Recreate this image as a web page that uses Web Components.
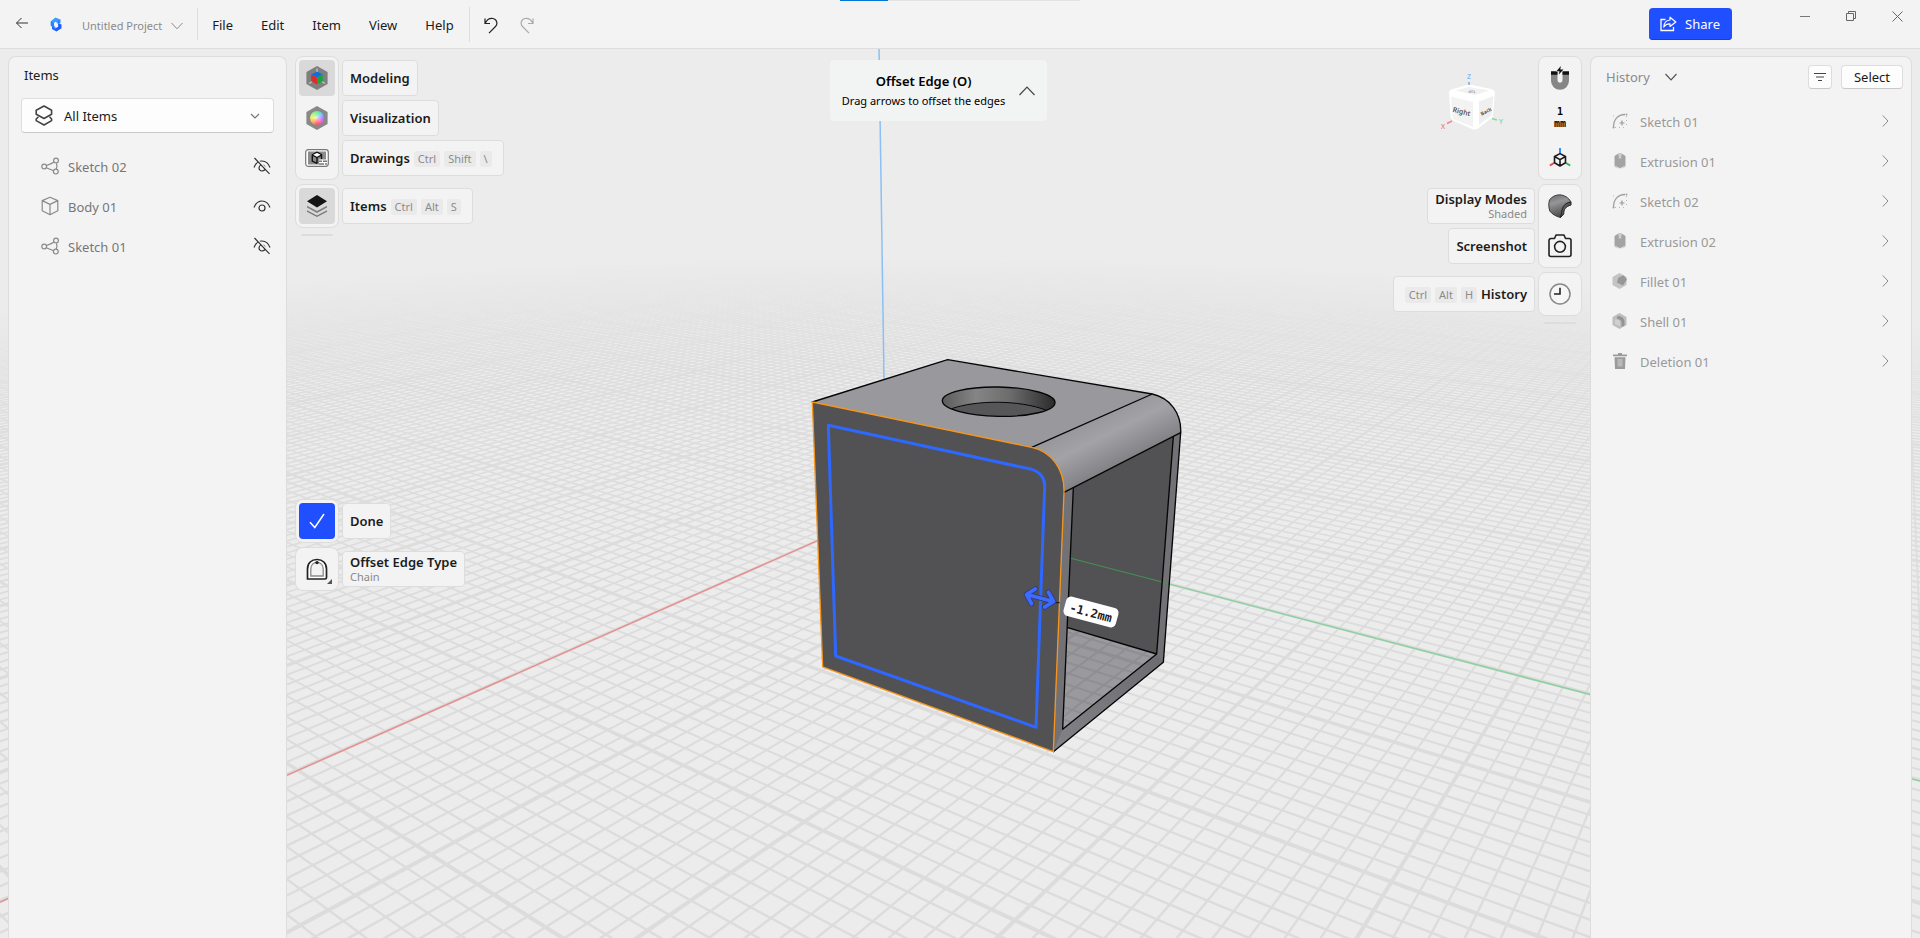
<!DOCTYPE html>
<html lang="en">
<head>
<meta charset="utf-8">
<title>Untitled Project</title>
<style>
  html, body {
    height: 100%;
    margin: 0;
  }

  body {
    font: 13px/18px "Noto Sans", "Open Sans", sans-serif;
    color: #1b1b1b;
    background: #ececec;
    overflow: hidden;
    --surface: #f3f3f3;
    --edge: #dddddd;
    --accent: #1f4fff;
    --muted: #8a8a8a;
  }
</style>
</head>
<body>

<modeler-app></modeler-app>

<script>

/**
 * Icon markup by name: [width, height, svg content]
 */
const ICONS = {
  back: [14, 12, '<path d="M13 6H1.500M6.500 1 1.500 6l5 5" stroke="#333" fill="none"/>'],
  logo: [12, 15, '<path d="M.800 4.200 5.500.400 10.300 2.400V6.200L8 7 5.800 4.800 3.800 6V8.500L6 10.800 4.500 11.200.800 8.800Z" fill="#3b9cff"/><path d="M.800 4.200V8.800L4.500 11.200 3.800 6Z" fill="#2a80ff"/><path d="M8 6.200 11.500 7.500V11.200L6.500 14.600 2 12V9.500L5 11.500 8.200 9.800Z" fill="#1f5dff"/><path d="M8 3.500 10.300 2.400V6.200L8 6.200Z" fill="#2f86ff"/>'],
  down: [14, 8, '<path d="M1.500 1 7 6.800 12.500 1" stroke="#8a8a8a" fill="none"/>'],
  downDark: [14, 8, '<path d="M1.500 1 7 6.800 12.500 1" stroke="#555" stroke-width="1.200" fill="none"/>'],
  downSmall: [10, 6, '<path d="M1 1 5 5 9 1" stroke="#777" stroke-width="1.200" fill="none"/>'],
  up: [16, 10, '<path d="M.500 9 8 1.200 15.500 9" stroke="#444" stroke-width="1.200" fill="none"/>'],
  undo: [14, 17, '<path d="M1 1.500V6.500H6M1.200 6.200C3 2.500 6 1 9 1.500c4 .700 5 5.500 2.500 8L5 16.200" stroke="#222" stroke-width="1.200" fill="none"/>'],
  redo: [14, 17, '<path d="M13 1.500V6.500H8M12.800 6.200C11 2.500 8 1 5 1.500 1 2.200 0 7 2.500 9.500L9 16.200" stroke="#aaa" stroke-width="1.200" fill="none"/>'],
  share: [17, 16, '<path d="M5.500 3.500H1v11h12.500V11" stroke="#fff" stroke-width="1.300" fill="none"/><path d="M10 1.200 15.800 6 10 10.500V7.800C7 7.600 5.200 8.600 3.800 11 4 7.200 6.300 4.300 10 4Z" stroke="#fff" stroke-width="1.200" stroke-linejoin="round" fill="none"/>'],
  minimize: [10, 10, '<path d="M0 5.500H10" stroke="#777"/>'],
  restore: [10, 10, '<path d="M.500 2.500h7v7h-7ZM2.500 2.500v-2h7v7h-2" stroke="#666" fill="none"/>'],
  close: [11, 11, '<path d="M.500.500l10 10M10.500.500l-10 10" stroke="#666" fill="none"/>'],
  allItems: [18, 21, '<g stroke="#444" stroke-width="1.600" stroke-linejoin="round" stroke-linecap="round" fill="none"><path d="M9 1 16.600 5.200V9.200L9 13.500 1.200 9.200V5.200Z"/><path d="M3 12.200 1.200 14V15.600L9 20l7.600-4.400V14L15 12.200"/></g>'],
  sketch: [19, 18, '<g stroke="#8a8a8a" stroke-width="1.200" fill="none"><circle cx="3.200" cy="9.500" r="2.400"/><circle cx="15" cy="3.600" r="2.400"/><circle cx="14.800" cy="14.600" r="2.400"/><path d="M5.400 8.500C8.500 7.600 11 6.500 13 5M5.300 10.700l7.200 3M15.500 6.200c.700 2 .600 4-.2 6"/></g>'],
  body: [18, 20, '<path d="M9 1.200 16.800 4.600V14.800L9 18.800 1.200 14.800V4.600ZM1.200 4.600 9 8.400l7.800-3.800M9 8.400V18.800" stroke="#8a8a8a" stroke-width="1.200" stroke-linejoin="round" fill="none"/>'],
  eye: [18, 14, '<path d="M1 8.500C2.500 4.500 5.500 2 9 2s6.500 2.500 8 6.500" stroke="#333" stroke-width="1.200" fill="none"/><circle cx="9" cy="9" r="3" stroke="#333" stroke-width="1.200" fill="none"/>'],
  eyeOff: [18, 18, '<path d="M1 10.500C2.500 6.500 5.500 4 9 4s6.500 2.500 8 6.500" stroke="#333" stroke-width="1.200" fill="none"/><circle cx="9" cy="11" r="3" stroke="#333" stroke-width="1.200" fill="none"/><path d="M2 .500 17 16.300" stroke="#f3f3f3" stroke-width="2"/><path d="M1.500 1 16.500 16.800" stroke="#333" stroke-width="1.200"/>'],
  modeling: [22, 24, '<path d="M11 0 21.600 6V18L11 24 .400 18V6Z" fill="#7f7f7f"/><path d="M11 2.500v4M3 17.500l4-2.500M19 17.500 15 15" stroke="#c4c4c4" stroke-width="1.400"/><path d="M11 5.500 16.800 8.500 11 11.600 5.200 8.500Z" fill="#0f6fe0"/><path d="M5.200 8.500 11 11.600V18.500L5.200 15.300Z" fill="#e02b2b"/><path d="M16.800 8.500 11 11.600V18.500l5.800-3.200Z" fill="#18a53c"/>'],
  visualization: [22, 24, '<path d="M11 0 21.600 6V18L11 24 .400 18V6Z" fill="#888"/><foreignObject x="4" y="5" width="14" height="14"><div class="wheel"></div></foreignObject>'],
  drawings: [24, 18, '<rect x=".700" y=".700" width="22.600" height="16.600" rx="2.500" fill="#fff" stroke="#777" stroke-width="1.200"/><path d="M3 2.500H21V10.500H14V15.500H3Z" fill="#8c8c8c"/><path d="M14 12.200h3M18 12.200h4M14 15h5M20 15h2" stroke="#777" stroke-width="1.600"/><path d="M12 3.200 16.500 5.600V10M12 14.500 7.300 12V5.800L12 3.200M7.300 5.800 12 8.400 16.500 5.800M12 8.400v6" stroke="#111" stroke-width="1.400" fill="none"/><path d="M12 3.900 15.600 5.800 12 7.700 8.200 5.800Z" fill="#fff"/>'],
  layers: [20, 22, '<path d="M0 15.200 10 20.500 20 15.200V16.800L10 22 0 16.800Z" fill="#777"/><path d="M0 10.700 10 16 20 10.700V12.600L10 18 0 12.600Z" fill="#808080"/><path d="M10 0 20 6.200 10 12.400 0 6.200Z" fill="#151515"/>'],
  magnet: [18, 24, '<path d="M0 6h6.500v8.200a2.500 2.500 0 0 0 5 0V6H18v8.800a9 9 0 0 1-18 0Z" fill="#868686"/><path d="M0 5.200h6.500v3.600H0ZM11.500 5.200H18v3.600h-6.500Z" fill="#111"/><path d="M9.800 0 5.500 5.200h3L7.800 8.500 12.500 3.500H9.300Z" fill="#111" stroke="#f3f3f3" stroke-width=".800" paint-order="stroke"/>'],
  axes: [22, 20, '<path d="M11 0V6" stroke="#3391ff" stroke-width="2"/><path d="M.800 17.500 5 15" stroke="#f04438" stroke-width="2"/><path d="M21.200 17.500 17 15" stroke="#23b455" stroke-width="2"/><path d="M11 5.600 16.500 8.500V14.800L11 18 5.500 14.800V8.500ZM5.500 8.500 11 11.600 16.500 8.500M11 11.600V18" stroke="#1b1b1b" stroke-width="1.600" stroke-linejoin="round" fill="none"/>'],
  shaded: [24, 24, '<defs><linearGradient id="s" x1="0" y1="0" x2=".300" y2="1"><stop offset="0" stop-color="#6b6b6d"/><stop offset=".400" stop-color="#969698"/><stop offset="1" stop-color="#4d4d4f"/></linearGradient></defs><path d="M1.500 6C3.500 3 7 1 11.500.800 16.500 1.200 20.500 3.500 23 8c-4.500 1-7.500 4-8 8.500L12.500 23.500C8 22.500 4 20 1.800 17 .500 13 .500 9 1.500 6Z" fill="url(#s)" stroke="#3a3a3a"/><path d="M23 8c-6 1-9 4.500-9.200 10l-1.300 5.500 3.300-3.500c-.300-4.500 2-7.500 7.200-9Z" fill="#58585a" stroke="#222"/>'],
  camera: [24, 24, '<path d="M3 4.500H6.500L8 1H16l1.500 3.500H21a2 2 0 0 1 2 2V20.500a2 2 0 0 1-2 2H3a2 2 0 0 1-2-2V6.500a2 2 0 0 1 2-2Z" stroke="#222" stroke-width="1.600" stroke-linejoin="round" fill="none"/><circle cx="12" cy="12.800" r="5.400" stroke="#222" stroke-width="1.600" fill="none"/>'],
  clock: [22, 22, '<circle cx="11" cy="11" r="10" stroke="#888" stroke-width="1.500" fill="#f6f6f6"/><path d="M11 4.800V11H5" stroke="#222" stroke-width="1.600" fill="none"/>'],
  check: [18, 18, '<path d="M2 10.200 6.800 15.500 16 2" stroke="#fff" stroke-width="1.500" fill="none"/>'],
  chain: [22, 22, '<path d="M1.500 21V11C1.500 5 5.500 1.500 11 1.500S20.500 5 20.500 11V19.500a1.500 1.500 0 0 1-1.500 1.500Z" stroke="#222" stroke-width="1.700" fill="#fff"/><path d="M4.800 18V11C4.800 7 7.500 4.500 11 4.500s6.200 2.500 6.200 6.500v7Z" stroke="#8a8a8a" stroke-width="1.300" fill="#f3f3f3"/><circle cx="11" cy="4.600" r="1.700" fill="#222"/>'],
  filter: [12, 10, '<path d="M0 1.500H12M2 5H10M4 8.500H8" stroke="#444" stroke-width="1.200"/>'],
  next: [7, 12, '<path d="M.800.500 6 6 .800 11.500" stroke="#8a8a8a" fill="none"/>'],
  hSketch: [16, 16, '<path d="M1.500 14C1.500 7 5.500 1.500 13 1.500" stroke="#a0a0a0" stroke-width="1.300" fill="none"/><path d="M10 7.500v5M7.500 10h5" stroke="#999" stroke-width="1.200"/><path d="M3 14.500H15M14.500 3V13M1 3h3" stroke="#b8b8b8" stroke-dasharray="1 3"/><circle cx="14.500" cy="1.500" r="1" fill="#a0a0a0"/><circle cx="1.500" cy="14.500" r="1" fill="#a0a0a0"/>'],
  hExtrusion: [12, 16, '<path d="M.500 12.500 6 16l5.500-3.500V14L6 16 .500 14Z" fill="#ccc"/><path d="M3.500 1 6 0 8.500 1 11.500 3V12.500L6 15.300.500 12.500V3Z" fill="#a3a3a3"/><path d="M6 0 8.500 2H7.300V5.500H4.700V2H3.500Z" fill="#cfcfcf"/>'],
  hFillet: [16, 16, '<path d="M7.500 0 14.500 4V12L7.500 16 .500 12V4Z" fill="#c4c4c4"/><path d="M6.500 4.500 11.500 2.200 15 6.500 11 12.500 4.800 9.500Z" fill="#979797"/>'],
  hShell: [16, 16, '<path d="M7.500 0 14.500 4V12L7.500 16 .500 12V4Z" fill="#bebebe"/><path d="M5 3.500C9 2.500 12.500 5 12.500 9V12.500L9.500 14V10C9.500 7.500 8 6 5 5.800Z" fill="#939393"/><path d="M3 6.500C7 6.500 8 8 8 10.500V13L3 11Z" fill="#d0d0d0"/>'],
  hDeletion: [14, 16, '<path d="M0 1.500H5V0H9V1.500H14V3.300H0Z" fill="#9b9b9b"/><path d="M1.500 4.200h11L12 16H2Z" fill="#9b9b9b"/><path d="M4.500 6h5.200L9.500 13.500h-5Z" fill="#b8b8b8"/>']
};

/**
 *
 * AppIcon
 *  - Element: app-icon
 *  - Description: draws one icon of the set
 *
 */
class AppIcon extends HTMLElement {

  connectedCallback() {
    const [width, height, content] = ICONS[this.getAttribute('name')];
    const root = this.attachShadow({mode: 'open'});
    root.innerHTML = `
      <style>
        :host { display: block; flex: none; }
        svg { display: block; }
        .wheel {
          width: 14px;
          height: 14px;
          border-radius: 50%;
          background:
            radial-gradient(#ffffffaa, #ffffff00 60%),
            conic-gradient(#66f090, #6fc4ff 50deg, #c070ff 95deg, #ff55c8 135deg, #ff5565 180deg, #ffa860 225deg, #f0f265 275deg, #66f090);
        }
      </style>
      <svg width="${width}" height="${height}" viewBox="0 0 ${width} ${height}" aria-hidden="true">${content}</svg>
    `;
  }

}

/**
 *
 * TitleBar
 *  - Element: title-bar
 *  - Description: project name, menus, share and window buttons
 *
 */
class TitleBar extends HTMLElement {

  constructor() {
    super();
    const root = this.attachShadow({mode: 'open'});
    root.innerHTML = `
      <style>
        :host {
          position: relative;
          display: flex;
          height: 48px;
          background: var(--surface);
          border-bottom: 1px solid var(--edge);
        }
        progress {
          appearance: none;
          position: absolute;
          top: 0;
          left: 50%;
          width: 240px;
          height: 1px;
          margin-left: -120px;
          border: 0;
          background: #e2e2e2;
        }
        progress::-webkit-progress-bar { background: #e2e2e2; }
        progress::-webkit-progress-value { background: #0078d4; }
        button {
          display: flex;
          align-items: center;
          justify-content: center;
          border: 0;
          padding: 0;
          font: inherit;
          color: inherit;
          background: none;
        }
        .start {
          display: flex;
          align-items: center;
        }
        .back { width: 44px; padding-bottom: 2px; align-self: stretch; }
        .logo { padding: 0 6px; }
        .project {
          gap: 8px;
          padding: 4px 13px 0 14px;
          font-size: 11px;
          color: var(--muted);
        }
        nav, .edits {
          display: flex;
          height: 32px;
          border-left: 1px solid var(--edge);
        }
        nav button { padding: 2px 14px 0; }
        .edits { gap: 22px; padding: 3px 14px 0; margin-left: 1px; }
        .end {
          display: flex;
          margin-left: auto;
        }
        .share {
          gap: 8px;
          height: 32px;
          margin: 8px 50px 0 0;
          padding: 0 12px 0 11px;
          border-radius: 4px;
          color: #ffffff;
          background: var(--accent);
          box-shadow: inset 0 -1px #1a3fd0;
        }
        .window { width: 46px; height: 32px; }
      </style>
      <progress value="48" max="240" aria-label="Loading"></progress>
      <div class="start">
        <button class="back" aria-label="Back"><app-icon name="back"></app-icon></button>
        <app-icon class="logo" name="logo"></app-icon>
        <button class="project">Untitled Project <app-icon name="down"></app-icon></button>
        <nav>
          <button>File</button>
          <button>Edit</button>
          <button>Item</button>
          <button>View</button>
          <button>Help</button>
        </nav>
        <div class="edits">
          <button aria-label="Undo"><app-icon name="undo"></app-icon></button>
          <button aria-label="Redo"><app-icon name="redo"></app-icon></button>
        </div>
      </div>
      <div class="end">
        <button class="share"><app-icon name="share"></app-icon>Share</button>
        <button class="window" aria-label="Minimize"><app-icon name="minimize"></app-icon></button>
        <button class="window" aria-label="Restore"><app-icon name="restore"></app-icon></button>
        <button class="window" aria-label="Close"><app-icon name="close"></app-icon></button>
      </div>
    `;
  }

}

/**
 *
 * SidePanel
 *  - Element: side-panel
 *  - Description: panel that runs down to the bottom of the window
 *
 */
class SidePanel extends HTMLElement {

  constructor() {
    super();
    const root = this.attachShadow({mode: 'open'});
    root.innerHTML = `
      <style>
        :host {
          display: flex;
          flex-direction: column;
          box-sizing: border-box;
          border: 1px solid var(--edge);
          border-bottom: 0;
          border-radius: 8px 8px 0 0;
          background: var(--surface);
        }
      </style>
      <slot></slot>
    `;
  }

}

/**
 *
 * ListRow
 *  - Element: list-row
 *  - Description: icon, name and a trailing button
 *
 */
class ListRow extends HTMLElement {

  connectedCallback() {
    const root = this.attachShadow({mode: 'open'});
    root.innerHTML = `
      <style>
        :host {
          display: flex;
          align-items: center;
          height: 40px;
          padding: 0 15px 0 31px;
          color: #777777;
        }
        :host([dim]) { padding: 0 22px 0 20px; color: #999999; }
        .icon {
          display: flex;
          justify-content: center;
          width: 20px;
          margin-right: 8px;
        }
        :host([dim]) .icon { width: 18px; margin-right: 11px; }
        .name { flex: 1; padding-top: 1px; }
        button { border: 0; padding: 0; background: none; }
      </style>
      <span class="icon"><app-icon name="${this.getAttribute('icon')}"></app-icon></span>
      <span class="name"><slot></slot></span>
      <button aria-label="${this.getAttribute('action')}"><app-icon name="${this.getAttribute('end')}"></app-icon></button>
    `;
  }

}

/**
 *
 * ToolGroup
 *  - Element: tool-group
 *  - Description: rail of tool buttons with their labels beside it
 *
 */
class ToolGroup extends HTMLElement {

  constructor() {
    super();
    const root = this.attachShadow({mode: 'open'});
    root.innerHTML = `
      <style>
        :host { display: flex; gap: 3px; }
        :host([side="right"]) { flex-direction: row-reverse; }
        .rail, .labels {
          display: flex;
          flex-direction: column;
          gap: 4px;
        }
        .rail {
          padding: 3px;
          border: 1px solid var(--edge);
          border-radius: 8px;
          background: var(--surface);
        }
        .labels { align-items: flex-start; padding: 4px 0; }
        :host([side="right"]) .labels { align-items: flex-end; }
      </style>
      <div class="rail"><slot name="tool"></slot></div>
      <div class="labels"><slot></slot></div>
    `;
  }

}

/**
 *
 * ToolButton
 *  - Element: tool-button
 *  - Description: square button of a rail
 *
 */
class ToolButton extends HTMLElement {

  connectedCallback() {
    const icon = this.getAttribute('icon');
    const root = this.attachShadow({mode: 'open'});
    root.innerHTML = `
      <style>
        :host { display: block; position: relative; }
        button {
          display: flex;
          align-items: center;
          justify-content: center;
          width: 36px;
          height: 36px;
          padding: 0;
          border: 0;
          border-radius: 4px;
          color: #000000;
          background: none;
          font: bold 10px/12px "DejaVu Sans Mono", monospace;
        }
        :host([active]) button { background: #d9d9d9; }
        :host([primary]) button { background: var(--accent); }
        :host([more])::after {
          content: "";
          position: absolute;
          right: 3px;
          bottom: 3px;
          border-left: 5px solid transparent;
          border-bottom: 5px solid #555555;
        }
      </style>
      <button aria-label="${this.getAttribute('label')}">${icon ? `<app-icon name="${icon}"></app-icon>` : '<slot></slot>'}</button>
    `;
  }

}

/**
 *
 * ToolLabel
 *  - Element: tool-label
 *  - Description: name of a tool with an optional note and shortcut keys
 *
 */
class ToolLabel extends HTMLElement {

  connectedCallback() {
    const keys = (this.getAttribute('keys') || '').split(' ').filter(Boolean);
    const note = this.getAttribute('note');
    const root = this.attachShadow({mode: 'open'});
    root.innerHTML = `
      <style>
        :host {
          display: flex;
          align-items: center;
          gap: 4px;
          box-sizing: border-box;
          height: 36px;
          padding: 0 7px;
          border: 1px solid var(--edge);
          border-radius: 4px;
          background: var(--surface);
          white-space: nowrap;
        }
        :host([keys]) { padding-right: 11px; }
        :host([side="right"]) { flex-direction: row-reverse; text-align: right; }
        :host([side="right"][keys]) { padding: 0 7px 0 11px; }
        b { display: block; font-weight: 600; }
        small {
          display: block;
          font-size: 11px;
          line-height: 14px;
          color: var(--muted);
        }
        :host([note]) b { line-height: 16px; }
        .keys { display: flex; gap: 4px; padding-top: 2px; }
        kbd {
          padding: 0 4px;
          border-radius: 3px;
          font: 11px/16px "Noto Sans", sans-serif;
          color: var(--muted);
          background: #eaeaea;
        }
      </style>
      <span><b><slot></slot></b>${note ? `<small>${note}</small>` : ''}</span>
      ${keys.length ? `<span class="keys">${keys.map((key) => `<kbd>${key}</kbd>`).join('')}</span>` : ''}
    `;
  }

}

/**
 *
 * HintBanner
 *  - Element: hint-banner
 *  - Description: name of the running tool and what to do next
 *
 */
class HintBanner extends HTMLElement {

  constructor() {
    super();
    const root = this.attachShadow({mode: 'open'});
    root.innerHTML = `
      <style>
        :host {
          display: flex;
          align-items: center;
          gap: 14px;
          height: 61px;
          padding: 0 12px;
          border-radius: 4px;
          background: #f2f3f3;
          text-align: center;
          color: #000000;
        }
        b { display: block; font-weight: 600; line-height: 20px; }
        small { display: block; font-size: 11px; line-height: 19px; }
        button { border: 0; padding: 0; background: none; }
      </style>
      <div><b><slot name="title"></slot></b><small><slot></slot></small></div>
      <button aria-label="Collapse"><app-icon name="up"></app-icon></button>
    `;
  }

}

/**
 *
 * ViewCube
 *  - Element: view-cube
 *  - Description: orientation cube with its three axes
 *
 */
class ViewCube extends HTMLElement {

  constructor() {
    super();
    const root = this.attachShadow({mode: 'open'});
    root.innerHTML = `
      <style>
        :host { display: block; }
        svg { display: block; }
        text { font-family: "Noto Sans", sans-serif; text-anchor: middle; }
      </style>
      <svg width="66" height="60" viewBox="0 0 66 60">
        <path d="M30 9v6" stroke="#6aa9f2" stroke-width="1.500"/>
        <path d="M13 48l-5 2.500" stroke="#e88" stroke-width="1.500"/>
        <path d="M53 45.500l5 1.500" stroke="#8d9" stroke-width="1.500"/>
        <path d="M10 19Q10 17 14 16L28 12Q30 11.500 33 12L52 16Q56 17 56 20L54 42Q54 45 50 47L39 55.500Q36 57.500 33 56L15 48Q12 46.500 11.500 43Z" fill="#fff"/>
        <path d="M16 17.500 30 14 50 17.500 36 22Z" fill="#f1f1f1"/>
        <path d="M12 23.500 34 29 34 54 14 46Z" fill="#f3f3f3"/>
        <path d="M40 28.500 54.500 23 52.500 42.500 40 52Z" fill="#efefef"/>
        <text transform="translate(22 41) rotate(14)" font-size="7" font-weight="600" fill="#555">Right</text>
        <text transform="translate(48 40) rotate(-28)" font-size="5" font-weight="600" fill="#444">Back</text>
        <text transform="translate(33 19) rotate(172)" font-size="4" fill="#777" dominant-baseline="central">Top</text>
        <text x="30" y="6" font-size="7" fill="#6aa9f2">Z</text>
        <text x="4" y="56" font-size="7" fill="#e66">X</text>
        <text x="62" y="51" font-size="7" fill="#6c8">Y</text>
      </svg>
    `;
  }

}

/**
 *
 * SceneView
 *  - Element: scene-view
 *  - Description: ground grid, axes and the model
 *
 */
class SceneView extends HTMLElement {

  // vanishing points of the ground axes, the origin, and the step per grid cell
  static xVanish = [1896, 65];
  static yVanish = [-815, 65];
  static origin = [887, 510];
  static xStep = 0.00922;
  static yStep = 0.00677;

  constructor() {
    super();
    const root = this.attachShadow({mode: 'open'});
    root.innerHTML = `
      <style>
        :host { display: block; }
        svg { display: block; width: 100%; height: 100%; }
        .value { font: bold 12px "DejaVu Sans Mono", monospace; text-anchor: middle; fill: #222222; }
      </style>
      <svg viewBox="0 49 1920 889" preserveAspectRatio="xMidYMid slice">
        <defs>
          <radialGradient id="fog" gradientUnits="userSpaceOnUse" cx="0" cy="0" r="1" gradientTransform="translate(900 1100) scale(2600 850)">
            <stop offset=".620" stop-color="#fff"/>
            <stop offset=".860" stop-color="#fff" stop-opacity=".900"/>
            <stop offset=".920" stop-color="#fff" stop-opacity=".600"/>
            <stop offset=".990" stop-color="#fff" stop-opacity="0"/>
          </radialGradient>
          <mask id="far" maskUnits="userSpaceOnUse" x="0" y="0" width="1920" height="938">
            <rect width="1920" height="938" fill="url(#fog)"/>
          </mask>
          <clipPath id="floor"><path d="M1067.600 627.600 1156.600 654 1062.600 729.300Z"/></clipPath>
          <linearGradient id="fillet" gradientUnits="userSpaceOnUse" x1="930" y1="270" x2="1010" y2="430">
            <stop offset="0" stop-color="#98979c"/>
            <stop offset=".350" stop-color="#a3a2a7"/>
            <stop offset="1" stop-color="#7b7a7e"/>
          </linearGradient>
          <linearGradient id="bore">
            <stop offset="0" stop-color="#5c5c5d"/>
            <stop offset=".300" stop-color="#858585"/>
            <stop offset=".600" stop-color="#6c6c6c"/>
            <stop offset="1" stop-color="#2b2b2b"/>
          </linearGradient>
          <linearGradient id="base" x1="1" y1="0" x2="0" y2="1">
            <stop offset="0" stop-color="#6c6b6f"/>
            <stop offset="1" stop-color="#838287"/>
          </linearGradient>
        </defs>
        <g mask="url(#far)">
          <g fill="#dcdcdc"><g id="grid"></g></g>
          <path d="M0 902 887 510" stroke="#e58f8f" stroke-width="1.500"/>
        </g>
        <path d="M887 510 1920 781" stroke="#8fd0a3" stroke-width="1.500"/>
        <path d="M879 48 884 379" stroke="#8dbff5" stroke-width="1.500"/>

        <g transform="translate(780 330) scale(.33333)" stroke-linejoin="round" stroke-linecap="round">
          <path d="M852 487 1202 308 1150 997 820 1265Z" fill="#727176"/>
          <path d="M848 1198 1130 972 1150 997 820 1265Z" fill="url(#base)"/>
          <path d="M880 474 1180 320 1130 972 863 893Z" fill="#525254"/>
          <path d="M863 893 1130 972 848 1198Z" fill="#9a999e"/>
        </g>
        <g clip-path="url(#floor)"><use href="#grid" fill="#8f8e93"/></g>
        <g transform="translate(780 330) scale(.33333)" stroke-linejoin="round" stroke-linecap="round">
          <path d="M873 685 1158 759" stroke="#3f9455" stroke-width="3"/>
          <path d="M880 474 848 1198 1130 972 1180 320M863 893 1130 972M1202 308 1150 997 820 1265" stroke="#050505" stroke-width="4" fill="none"/>

          <path d="M97 216 503 89 1117 192 755 352Z" fill="#99989d"/>
          <path d="M755 352 1117 192C1170 204 1205 250 1202 308L852 487C854 420 815 364 755 352Z" fill="url(#fillet)"/>
          <path d="M97 216 503 89 1117 192 755 352M1117 192C1170 204 1205 250 1202 308L852 487" stroke="#050505" stroke-width="4" fill="none"/>

          <ellipse cx="656" cy="215" rx="169" ry="44" fill="url(#bore)" transform="rotate(1 656 215)"/>
          <path d="M515 236C590 209 720 210 797 240 740 262 590 268 515 236Z" fill="#565658"/>
          <path d="M515 236C590 209 720 210 797 240" stroke="#050505" stroke-width="3" fill="none"/>
          <ellipse cx="656" cy="215" rx="169" ry="44" fill="none" stroke="#050505" stroke-width="4" transform="rotate(1 656 215)"/>

          <path d="M97 216 755 352C815 364 854 420 852 487L820 1265 128 1011Z" fill="#525254" stroke="#f5951d" stroke-width="4"/>
          <path d="M145 286 755 418C780 425 795 445 794 470L768 1192 167 978Z" fill="none" stroke="#2f68ff" stroke-width="9"/>

          <path d="M828 818h10" stroke="#111" stroke-width="3"/>
          <g transform="translate(780 804) rotate(14.500)" fill="none">
            <path d="M-36 0H36M-20-23-42 0-20 23M20-23 42 0 20 23" stroke="#2b3a78" stroke-width="16"/>
            <path d="M-36 0H36M-20-23-42 0-20 23M20-23 42 0 20 23" stroke="#3d6bff" stroke-width="11"/>
          </g>
        </g>

        <g transform="translate(1091 612) rotate(15)">
          <rect x="-27" y="-10" width="54" height="20" rx="5" fill="#fff"/>
          <text class="value" y="5">-1.2mm</text>
        </g>
      </svg>
    `;

    this.drawGrid(root.getElementById('grid'));
  }

  /**
   * @param {number} x
   * @param {number} y
   * @returns {number[]} point on the ground in scene coordinates
   */
  project(x, y) {
    const {xVanish, yVanish, origin, xStep, yStep} = SceneView;
    const u = x * xStep;
    const v = -y * yStep;
    const w = 1 + u + v;
    return [0, 1].map((i) => (origin[i] + u * xVanish[i] + v * yVanish[i]) / w);
  }

  /**
   * Outline of one grid line, thinner towards the horizon
   */
  lineShape(from, to, weight) {
    const dx = to[0] - from[0];
    const dy = to[1] - from[1];
    const length = Math.hypot(dx, dy);
    const half = ([, y]) => weight * (0.35 + 0.85 * (y - 65) / 835);
    const edge = (p, side) => {
      const offset = half(p) * side / length;
      return `${(p[0] - dy * offset).toFixed(2)} ${(p[1] + dx * offset).toFixed(2)}`;
    };
    return `M${edge(from, 1)}L${edge(to, 1)} ${edge(to, -1)} ${edge(from, -1)}Z`;
  }

  drawGrid(target) {
    const {xStep, yStep} = SceneView;
    const near = 0.35;
    const far = 2.8;
    const paths = {minorX: '', minorY: '', majorX: '', majorY: ''};

    for (let i = -200; i <= 300; i++) {
      const kind = i % 10 ? 'minor' : 'major';
      const weight = i % 10 ? 1 : 1.7;

      // y = i, running along x
      const xAt = (w) => (w - 1 + i * yStep) / xStep;
      paths[`${kind}X`] += this.lineShape(this.project(xAt(near), i), this.project(xAt(far), i), weight);

      // x = i, running along y
      const yAt = (w) => (1 + i * xStep - w) / yStep;
      paths[`${kind}Y`] += this.lineShape(this.project(i, yAt(near)), this.project(i, yAt(far)), weight);
    }

    Object.values(paths).forEach((d) => {
      const path = document.createElementNS('http://www.w3.org/2000/svg', 'path');
      path.setAttribute('d', d);
      target.append(path);
    });
  }

}

/**
 *
 * ModelerApp
 *  - Element: modeler-app
 *  - Description: the whole window
 *
 */
class ModelerApp extends HTMLElement {

  static items = [
    ['sketch', 'Sketch 02', 'eyeOff'],
    ['body', 'Body 01', 'eye'],
    ['sketch', 'Sketch 01', 'eyeOff']
  ];

  static steps = [
    ['hSketch', 'Sketch 01'],
    ['hExtrusion', 'Extrusion 01'],
    ['hSketch', 'Sketch 02'],
    ['hExtrusion', 'Extrusion 02'],
    ['hFillet', 'Fillet 01'],
    ['hShell', 'Shell 01'],
    ['hDeletion', 'Deletion 01']
  ];

  constructor() {
    super();
    const root = this.attachShadow({mode: 'open'});
    root.innerHTML = `
      <style>
        :host {
          display: flex;
          flex-direction: column;
          height: 100vh;
        }
        main {
          position: relative;
          flex: 1;
          display: flex;
          gap: 8px;
          min-height: 0;
          padding: 7px 8px 0;
        }
        scene-view { position: absolute; inset: 0; }
        side-panel, .tools, hint-banner { position: relative; }
        .items { width: 279px; }
        .history { width: 322px; }
        h2 {
          margin: 0;
          font-size: 13px;
          font-weight: 400;
          line-height: 18px;
        }
        .items h2 { padding: 9px 15px 14px; }
        .picker {
          position: relative;
          display: flex;
          align-items: center;
          margin: 0 12px 13px;
        }
        select {
          appearance: none;
          flex: 1;
          height: 35px;
          padding: 0 42px;
          border: 1px solid var(--edge);
          border-bottom-color: #c8c8c8;
          border-radius: 4px;
          font: inherit;
          color: inherit;
          background: #fdfdfd;
        }
        .picker app-icon { position: absolute; left: 14px; pointer-events: none; }
        .picker app-icon:last-child { left: auto; right: 14px; }
        .history header {
          display: flex;
          align-items: center;
          gap: 9px;
          padding: 8px 8px 12px 15px;
        }
        .history h2 {
          display: flex;
          align-items: center;
          gap: 14px;
          flex: 1;
          color: var(--muted);
        }
        header button {
          display: flex;
          align-items: center;
          justify-content: center;
          height: 24px;
          padding: 0 12px;
          border: 1px solid var(--edge);
          border-bottom-color: #c8c8c8;
          border-radius: 4px;
          font: inherit;
          color: inherit;
          background: #fdfdfd;
        }
        header .filter { width: 24px; padding: 0; }
        .tools { display: flex; flex-direction: column; gap: 4px; }
        .grip {
          width: 32px;
          height: 2px;
          margin: 2px 6px;
          border-radius: 1px;
          background: var(--edge);
        }
        .right .grip { align-self: flex-end; }
        .context { margin-top: 257px; display: flex; flex-direction: column; gap: 4px; }
        .side { flex: 1; display: flex; align-items: flex-start; }
        .side.right { justify-content: flex-end; }
        view-cube { margin: 13px 30px 0 0; }
        hint-banner { margin-top: 4px; align-self: flex-start; }
      </style>
      <title-bar></title-bar>
      <main>
        <scene-view></scene-view>

        <side-panel class="items">
          <h2>Items</h2>
          <label class="picker">
            <select aria-label="Item filter"><option>All Items</option></select>
            <app-icon name="allItems"></app-icon>
            <app-icon name="downSmall"></app-icon>
          </label>
          ${ModelerApp.items.map(([icon, name, eye]) => `<list-row icon="${icon}" end="${eye}" action="Visibility">${name}</list-row>`).join('')}
        </side-panel>

        <div class="side">
          <div class="tools">
            <tool-group>
              <tool-button slot="tool" icon="modeling" label="Modeling" active></tool-button>
              <tool-button slot="tool" icon="visualization" label="Visualization"></tool-button>
              <tool-button slot="tool" icon="drawings" label="Drawings"></tool-button>
              <tool-label>Modeling</tool-label>
              <tool-label>Visualization</tool-label>
              <tool-label keys="Ctrl Shift \\">Drawings</tool-label>
            </tool-group>
            <tool-group>
              <tool-button slot="tool" icon="layers" label="Items" active></tool-button>
              <tool-label keys="Ctrl Alt S">Items</tool-label>
            </tool-group>
            <div class="grip"></div>
            <div class="context">
              <tool-group>
                <tool-button slot="tool" icon="check" label="Done" primary></tool-button>
                <tool-label>Done</tool-label>
              </tool-group>
              <tool-group>
                <tool-button slot="tool" icon="chain" label="Offset Edge Type" more></tool-button>
                <tool-label note="Chain">Offset Edge Type</tool-label>
              </tool-group>
            </div>
          </div>
        </div>

        <hint-banner><span slot="title">Offset Edge (O)</span>Drag arrows to offset the edges</hint-banner>

        <div class="side right">
          <div class="tools right">
            <tool-group side="right">
              <tool-button slot="tool" icon="magnet" label="Snapping"></tool-button>
              <tool-button slot="tool" label="Grid step 1 mm">1<br>mm</tool-button>
              <tool-button slot="tool" icon="axes" label="Orientation"></tool-button>
              <view-cube></view-cube>
            </tool-group>
            <tool-group side="right">
              <tool-button slot="tool" icon="shaded" label="Display Modes"></tool-button>
              <tool-button slot="tool" icon="camera" label="Screenshot"></tool-button>
              <tool-label side="right" note="Shaded">Display Modes</tool-label>
              <tool-label side="right">Screenshot</tool-label>
            </tool-group>
            <tool-group side="right">
              <tool-button slot="tool" icon="clock" label="History"></tool-button>
              <tool-label side="right" keys="Ctrl Alt H">History</tool-label>
            </tool-group>
            <div class="grip"></div>
          </div>
        </div>

        <side-panel class="history">
          <header>
            <h2>History <app-icon name="downDark"></app-icon></h2>
            <button class="filter" aria-label="Filter"><app-icon name="filter"></app-icon></button>
            <button>Select</button>
          </header>
          ${ModelerApp.steps.map(([icon, name]) => `<list-row dim icon="${icon}" end="next" action="Expand">${name}</list-row>`).join('')}
        </side-panel>
      </main>
    `;
  }

}

customElements.define('app-icon', AppIcon);
customElements.define('title-bar', TitleBar);
customElements.define('side-panel', SidePanel);
customElements.define('list-row', ListRow);
customElements.define('tool-group', ToolGroup);
customElements.define('tool-button', ToolButton);
customElements.define('tool-label', ToolLabel);
customElements.define('hint-banner', HintBanner);
customElements.define('view-cube', ViewCube);
customElements.define('scene-view', SceneView);
customElements.define('modeler-app', ModelerApp);

</script>
</body>
</html>
